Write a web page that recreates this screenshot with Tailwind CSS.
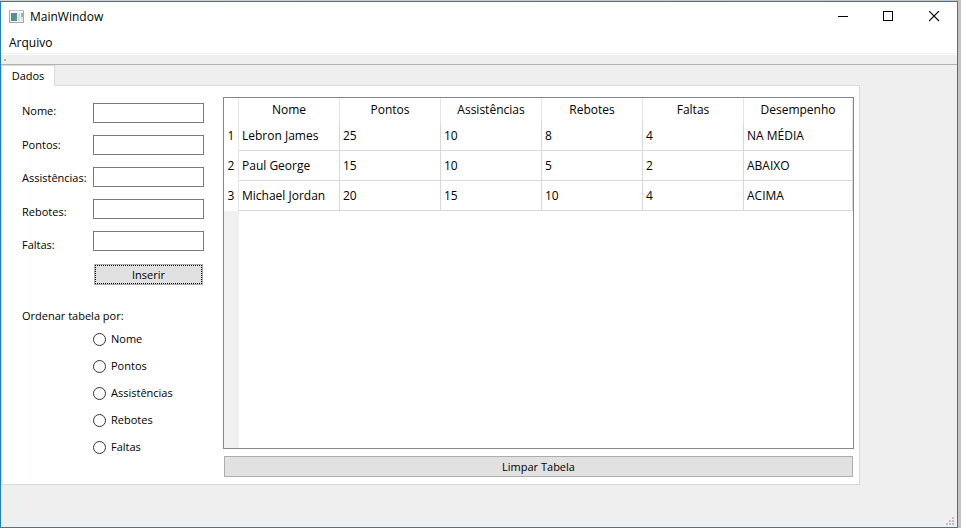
<!DOCTYPE html>
<html lang="pt">
<head>
<meta charset="utf-8">
<meta name="viewport" content="width=device-width, initial-scale=1">
<title>MainWindow</title>
<script src="https://cdn.jsdelivr.net/npm/@tailwindcss/browser@4"></script>
</head>
<body class="flex min-h-screen bg-linear-to-r from-[#d0d0d0] to-[#c3c3c3] pt-px pr-[3px] font-['Open_Sans','Noto_Sans',sans-serif] text-[12px] leading-4 text-black">
<div class="relative flex min-w-0 flex-1 flex-col border border-[#1a7fd4] bg-[#efefef]">
  <header class="flex h-[29px] items-center bg-white pl-2">
    <svg class="size-4 shrink-0" viewBox="0 0 16 16" shape-rendering="crispEdges" aria-hidden="true">
      <defs><linearGradient id="g" x1="0" y1="0" x2="1" y2="1"><stop offset="0" stop-color="#5b7fae"/><stop offset="1" stop-color="#4fa06a"/></linearGradient></defs>
      <rect x="0.5" y="1.5" width="14" height="12" fill="#f4f4f4" stroke="#a5a9ae"/>
      <rect x="0" y="1" width="15" height="1" fill="#c3c7cc"/>
      <rect x="2" y="4" width="6" height="8" fill="url(#g)"/>
      <rect x="9" y="4" width="2" height="8" fill="#d6dce2"/>
      <rect x="12" y="4" width="2" height="4" fill="#8fb9a8"/>
      <rect x="12" y="8" width="2" height="4" fill="#d9e3e0"/>
    </svg>
    <h1 class="ml-[5px] flex-1">MainWindow</h1>
    <button type="button" aria-label="Minimizar" class="flex h-full w-[45px] items-center justify-center">
      <svg class="size-[11px]" viewBox="0 0 11 11" shape-rendering="crispEdges"><path d="M0 5.5H10" stroke="#000"/></svg>
    </button>
    <button type="button" aria-label="Maximizar" class="flex h-full w-[45px] items-center justify-center">
      <svg class="size-[11px]" viewBox="0 0 11 11" shape-rendering="crispEdges"><path d="M.5 .5h9v9h-9z" fill="none" stroke="#000"/></svg>
    </button>
    <button type="button" aria-label="Fechar" class="flex h-full w-[46px] items-center justify-center">
      <svg class="size-[11px]" viewBox="0 0 11 11"><path d="M0 0l10 10M10 0l-10 10" stroke="#000" stroke-width="1.1"/></svg>
    </button>
  </header>
  <nav class="flex h-[23px] items-end border-b border-[#f0f0f0] bg-white px-2 pb-[2px]">
    <button type="button">Arquivo</button>
  </nav>
  <div class="flex h-[11px] items-center border-t border-b border-t-white border-b-[#b2b2b2] pl-[3px]">
    <span class="size-[2px] bg-[#b5b5b5]"></span>
  </div>
  <main class="mr-[97px] text-[11px]">
    <div role="tablist" class="flex">
      <button type="button" role="tab" aria-selected="true" class="relative -mb-px h-[21px] w-[54px] border border-b-0 border-[#d9d9d9] bg-white text-center">Dados</button>
    </div>
    <div role="tabpanel" class="flex border border-[#d9d9d9] bg-white py-[7px] pr-[5px] pl-5">
      <form class="w-[201px] shrink-0 pt-[10px]">
        <div class="flex justify-between pr-[19px]">
          <div class="flex h-[150px] flex-col justify-between">
            <label for="nome">Nome:</label>
            <label for="pontos">Pontos:</label>
            <label for="assist">Assistências:</label>
            <label for="rebotes">Rebotes:</label>
            <label for="faltas">Faltas:</label>
          </div>
          <div class="w-[111px]">
            <div class="flex flex-col gap-3">
              <input id="nome" type="text" class="h-5 w-full border border-[#7a7a7a] bg-white px-1">
              <input id="pontos" type="text" class="h-5 w-full border border-[#7a7a7a] bg-white px-1">
              <input id="assist" type="text" class="h-5 w-full border border-[#7a7a7a] bg-white px-1">
              <input id="rebotes" type="text" class="h-5 w-full border border-[#7a7a7a] bg-white px-1">
              <input id="faltas" type="text" class="h-5 w-full border border-[#7a7a7a] bg-white px-1">
            </div>
            <div class="flex px-px pt-[13px]">
              <button type="button" class="h-[21px] flex-1 border border-[#adadad] bg-[#e1e1e1]"><span class="flex h-full items-center justify-center border border-dotted border-black">Inserir</span></button>
            </div>
          </div>
        </div>
        <fieldset class="mt-[23px]">
          <legend>Ordenar tabela por:</legend>
          <div class="flex flex-col gap-[11px] pt-[7px] pl-[71px]">
            <label class="flex items-center gap-[5px]"><input type="radio" name="ordem" class="size-[13px] appearance-none rounded-full border border-[#333] bg-white checked:border-4">Nome</label>
            <label class="flex items-center gap-[5px]"><input type="radio" name="ordem" class="size-[13px] appearance-none rounded-full border border-[#333] bg-white checked:border-4">Pontos</label>
            <label class="flex items-center gap-[5px]"><input type="radio" name="ordem" class="size-[13px] appearance-none rounded-full border border-[#333] bg-white checked:border-4">Assistências</label>
            <label class="flex items-center gap-[5px]"><input type="radio" name="ordem" class="size-[13px] appearance-none rounded-full border border-[#333] bg-white checked:border-4">Rebotes</label>
            <label class="flex items-center gap-[5px]"><input type="radio" name="ordem" class="size-[13px] appearance-none rounded-full border border-[#333] bg-white checked:border-4">Faltas</label>
          </div>
        </fieldset>
      </form>
      <section class="flex min-w-0 flex-1 flex-col gap-[7px] pt-1">
        <div class="flex min-h-[352px] flex-1 flex-col border border-[#828790]">
          <table class="w-full table-fixed border-separate border-spacing-0 text-[12px]">
            <colgroup><col class="w-[15px]"><col class="w-[101px]"><col class="w-[101px]"><col class="w-[101px]"><col class="w-[101px]"><col class="w-[101px]"><col></colgroup>
            <thead>
              <tr class="h-[23px] *:border-r *:border-[#e5e5e5] *:p-0 *:font-normal">
                <td></td><th scope="col">Nome</th><th scope="col">Pontos</th><th scope="col">Assistências</th><th scope="col">Rebotes</th><th scope="col">Faltas</th><th scope="col">Desempenho</th>
              </tr>
            </thead>
            <tbody class="[&_td]:border-r [&_td]:border-b [&_td]:border-[#d8d8d8] [&_td]:px-[3px] [&_th]:border-r [&_th]:border-[#e5e5e5] [&_th]:font-normal">
              <tr class="h-[30px]"><th scope="row">1</th><td>Lebron James</td><td>25</td><td>10</td><td>8</td><td>4</td><td>NA MÉDIA</td></tr>
              <tr class="h-[30px]"><th scope="row">2</th><td>Paul George</td><td>15</td><td>10</td><td>5</td><td>2</td><td>ABAIXO</td></tr>
              <tr class="h-[30px]"><th scope="row">3</th><td>Michael Jordan</td><td>20</td><td>15</td><td>10</td><td>4</td><td>ACIMA</td></tr>
            </tbody>
          </table>
          <div class="w-[15px] flex-1 bg-[#f0f0f0]"></div>
        </div>
        <button type="button" class="mx-px h-[21px] border border-[#adadad] bg-[#e1e1e1]">Limpar Tabela</button>
      </section>
    </div>
  </main>
  <svg class="absolute right-[3px] bottom-[2px] size-2" viewBox="0 0 8 8" shape-rendering="crispEdges" aria-hidden="true"><path d="M6 0h2v2H6zM3 3h2v2H3zM6 3h2v2H6zM0 6h2v2H0zM3 6h2v2H3zM6 6h2v2H6z" fill="#bfbfbf"/></svg>
</div>
</body>
</html>
